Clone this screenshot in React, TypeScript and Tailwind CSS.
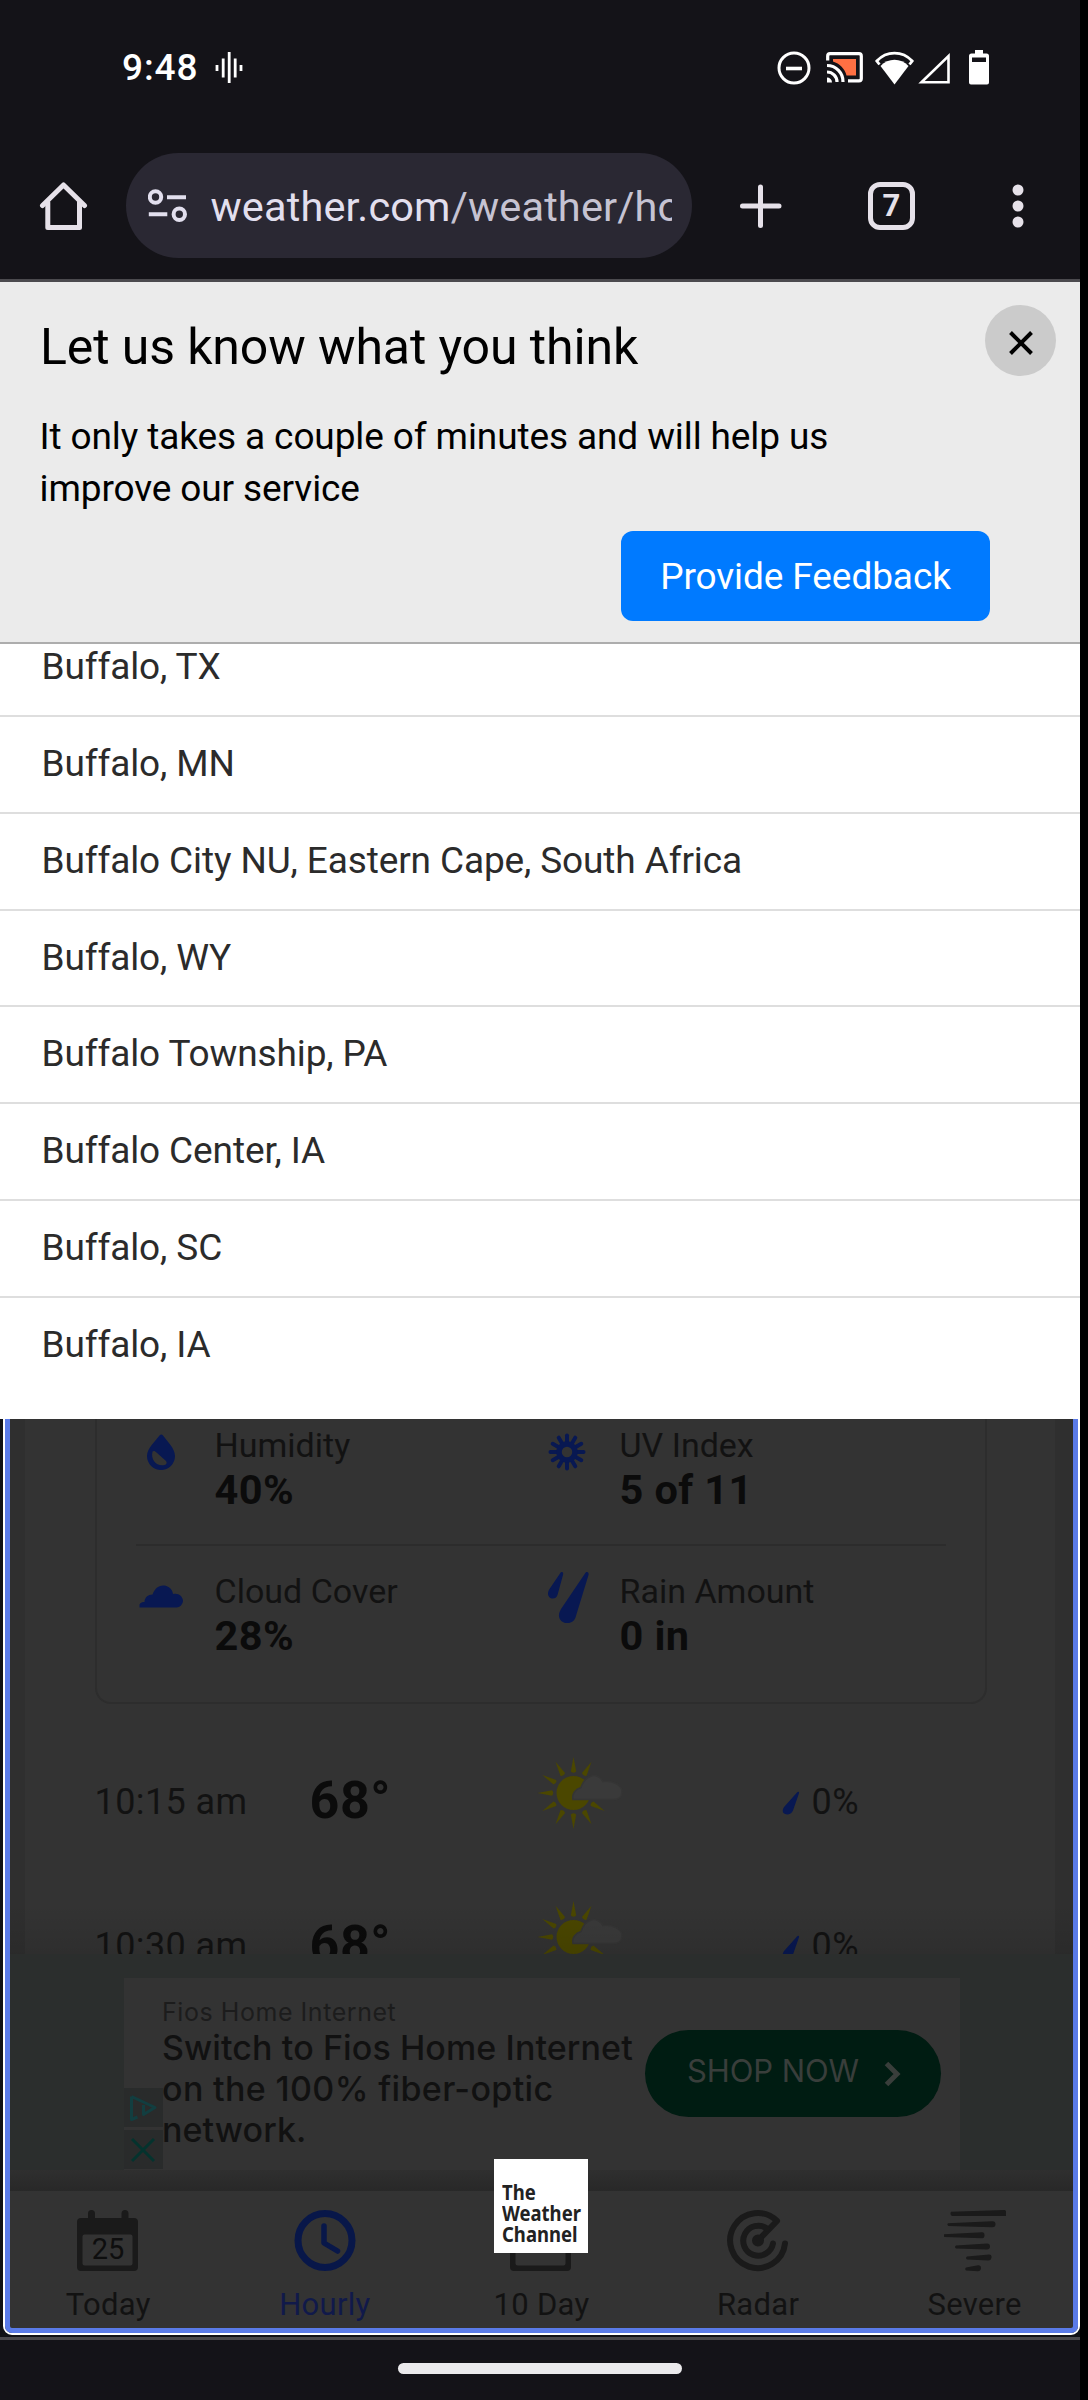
import React from "react";

const cities = [
  "Buffalo, TX",
  "Buffalo, MN",
  "Buffalo City NU, Eastern Cape, South Africa",
  "Buffalo, WY",
  "Buffalo Township, PA",
  "Buffalo Center, IA",
  "Buffalo, SC",
  "Buffalo, IA",
];

function StatusBar() {
  return (
    <div className="flex h-[132px] items-center pt-[3px] pl-[122px] text-white">
      <span className="w-[93px] font-['Roboto'] text-[37px] leading-[44px] font-medium tracking-[0.9px]">9:48</span>
      <svg width="28" height="32" viewBox="0 0 28 32" stroke="#fff" strokeWidth="2.8">
        <path d="M2 13v6M8.2 6.500v19M14.200 0v31M20.200 6.500v19M26 13v6" />
      </svg>
      <div className="flex flex-1 items-center pl-[534px]">
        <svg width="34" height="34" viewBox="0 0 34 34" fill="none" stroke="#fff">
          <circle cx="17" cy="17" r="15" strokeWidth="3" />
          <path d="M9 17.500h16" strokeWidth="3.600" />
        </svg>
        <svg className="ml-[15px]" width="37" height="31" viewBox="0 0 37 31" fill="none">
          <path d="M7 7h23v16.500H20.500C19 17 13.500 11.500 7 9.500z" fill="#ff7043" />
          <path d="M1.700 8.500V4a2.300 2.300 0 0 1 2.300-2.300h29A2.300 2.300 0 0 1 35.300 4v22.500a2.300 2.300 0 0 1-2.300 2.300H22" stroke="#fff" strokeWidth="3.200" />
          <path d="M1 13.500A16 16 0 0 1 17 30M1 20a10 10 0 0 1 10 10" stroke="#fff" strokeWidth="3.200" />
          <path d="M1 25.500a5 5 0 0 1 5 5H1z" fill="#fff" />
        </svg>
        <svg className="ml-[12px]" width="39" height="34" viewBox="0 0 39 34" fill="none">
          <path d="M19.500 33.500 5.500 15C13 6.500 26 6.500 33.500 15z" fill="#fff" />
          <path d="M4.500 13.500 1.800 10C11.500-.6 27.500-.6 37.200 10l-2.700 3.500" stroke="#fff" strokeWidth="2.800" />
        </svg>
        <svg className="ml-[4px]" width="33" height="34" viewBox="0 0 33 34" fill="none">
          <path d="M3.500 31.200 30.500 5v26.200z" stroke="#fff" strokeWidth="2.600" />
        </svg>
        <svg className="ml-[18px]" width="20" height="35" viewBox="0 0 20 35">
          <path fillRule="evenodd" fill="#fff" d="M6 0h8v3.500h3.500A2.500 2.500 0 0 1 20 6v26.500a2 2 0 0 1-2 2H2a2 2 0 0 1-2-2V6a2.500 2.500 0 0 1 2.500-2.500H6zM3 7.500V12h14V7.500z" />
        </svg>
      </div>
    </div>
  );
}

function Toolbar() {
  return (
    <div className="flex h-[147px] items-center pl-[39px]">
      <svg width="49" height="50" viewBox="0 0 49 50" fill="none" stroke="#e6e1e9" strokeWidth="5" strokeLinecap="round" strokeLinejoin="round">
        <path d="M3.500 24.500 24.500 4l21 20.500" />
        <path d="M8.800 21.500V46.500h31.700v-25" />
      </svg>
      <div className="ml-[38px] flex h-[105px] w-[566px] items-center rounded-full bg-[#2a2833] pr-[20px] pl-[22px]">
        <svg width="39" height="34" viewBox="0 0 39 34" fill="none" stroke="#e2dfee" strokeWidth="4">
          <circle cx="7.500" cy="8" r="5.700" />
          <path d="M19 8.200h19M.8 25.200h18.500" />
          <circle cx="31.300" cy="25.200" r="5.700" />
        </svg>
        <div className="mt-[3px] ml-[23.500px] w-[461px] overflow-hidden font-['Roboto'] text-[41.5px] leading-[60px] tracking-[0.15px] whitespace-nowrap text-[#e2dfee]">
          weather.com<span className="text-[#c6c3d2]">/weather/hourbyhour</span>
        </div>
      </div>
      <svg className="ml-[47px]" width="44" height="44" viewBox="0 0 44 44" stroke="#e6e1e9" strokeWidth="5" strokeLinecap="round">
        <path d="M21.500 3v38.500M3.500 22h36.500" />
      </svg>
      <div className="ml-[85px] flex h-[48px] w-[47px] items-center justify-center rounded-[12px] border-[5px] border-[#e6e1e9]">
        <span className="font-['Roboto'] text-[31px] leading-[36px] font-bold text-[#e6e1e9]">7</span>
      </div>
      <svg className="ml-[97px]" width="12" height="44" viewBox="0 0 12 44" fill="#e6e1e9">
        <circle cx="6" cy="6" r="5.500" />
        <circle cx="6" cy="22" r="5.500" />
        <circle cx="6" cy="38" r="5.500" />
      </svg>
    </div>
  );
}

function FeedbackBanner() {
  return (
    <section className="relative h-[362px] border-b-2 border-[#adadad] bg-[#ebebeb] font-['Roboto'] text-black">
      <h1 className="pt-[35px] pl-[40px] text-[50px] leading-[60px] tracking-[-0.12px]">Let us know what you think</h1>
      <p className="mt-[34px] w-[860px] pl-[39.500px] text-[37px] leading-[52px] tracking-[-0.11px]">
        It only takes a couple of minutes and will help us improve our service
      </p>
      <button className="mt-[16px] ml-[621px] flex h-[90px] w-[369px] items-center justify-center rounded-[12px] bg-[#007aff] pt-[2px] text-[37px] tracking-[-0.09px] text-white">
        Provide Feedback
      </button>
      <button className="absolute top-[23px] right-[24px] flex size-[71px] items-center justify-center rounded-full bg-[#cbcbcb]">
        <svg className="mt-[4px]" width="26" height="26" viewBox="0 0 26 26" stroke="#000" strokeWidth="4">
          <path d="M2.500 2.500l21 21M23.500 2.500l-21 21" />
        </svg>
      </button>
    </section>
  );
}

function CityList() {
  return (
    <div className="h-[775px] overflow-hidden bg-white">
      <ul className="mt-[-23.750px] font-['Roboto'] text-[37px] tracking-[-0.12px] text-[#2b2b2b]">
        {cities.map((c) => (
          <li key={c} className="h-[96.750px] border-b-2 border-[#dedede] pl-[41.500px] leading-[94px] last:border-b-0">
            {c}
          </li>
        ))}
      </ul>
    </div>
  );
}

const ink = "#081852";

function HumidityIcon() {
  return (
    <svg width="50" height="54" viewBox="0 0 50 54">
      <path fill={ink} d="M23.500 10.500c1-1.300 2.500-1.300 3.500 0C31.500 16.500 39 23.500 39 31a14 14 0 0 1-28 0c0-7.500 8-14.500 12.500-20.500z" />
      <path fill="#333" d="M16.500 26.500c1.500-1 2.500-.5 4 1l9.500 8.500c1.300 1.500.5 3.500-1.500 4-8 1.500-14-5-12-13.500z" />
    </svg>
  );
}

function UvIcon() {
  return (
    <svg width="50" height="54" viewBox="0 0 50 54">
      <g transform="translate(26 27)" stroke={ink} strokeLinecap="round">
        {Array.from({ length: 12 }, (_, i) => (
          <path key={i} d="M0-9.500v-7" strokeWidth="4" transform={`rotate(${i * 30})`} />
        ))}
        <circle r="8" fill="none" strokeWidth="5.500" />
      </g>
    </svg>
  );
}

function CloudIcon() {
  return (
    <svg width="50" height="54" viewBox="0 0 50 54">
      <path fill={ink} d="M3.500 36.500v-3c1-2 3-2.500 5-2.500 0-4.500 3.500-7.500 8-7.500C19 16.500 24 14 28 14.500c5 .5 8.500 4 9 8.500 5-1.500 10 2 10 7a6.800 6.800 0 0 1-6.500 6.500z" />
    </svg>
  );
}

function RainIcon() {
  return (
    <svg width="50" height="54" viewBox="0 0 50 54" fill={ink}>
      <path d="M19 2.500c1.500-2.500 4-1.500 3 1.500L16.500 24c-1.500 5.500-10 4.500-9.500-2 .2-1.500.6-2.500 1.500-4z" />
      <path d="M44 2.500c1.500-2.800 4.300-1.500 3.500 1.500L34.500 46.500c-3 9-17.500 6.500-16.500-3 .3-2 1-3.500 2-5.500z" />
    </svg>
  );
}

function Detail({ icon, label, value }: { icon: React.ReactNode; label: string; value: string }) {
  return (
    <div className="flex w-[406px] gap-[29px]">
      {icon}
      <div>
        <div className="text-[34px] leading-[40px] text-[#121212]">{label}</div>
        <div className="text-[41.500px] leading-[50px] font-bold tracking-[0.4px] text-[#0b0b0b]">{value}</div>
      </div>
    </div>
  );
}

function PartlyCloudy() {
  return (
    <svg width="86" height="74" viewBox="0 0 86 74">
      <g transform="translate(36.500 37)" fill="#4b4700">
        <circle r="17" />
        {Array.from({ length: 12 }, (_, i) =>
          i === 2 || i === 3 ? null : (
            <path key={i} d="M-2.700-21.500 0-36 2.700-21.500Q0-19-2.700-21.500z" transform={`rotate(${i * 30})`} />
          ),
        )}
      </g>
      <path d="M36 43.500c-1.500-6 3-10.500 8-12 3.500-11 15-17 22-6 9-1 19 3 19 10 0 6-3 8-8 8z" fill="#3a3a3a" stroke="#353535" strokeWidth="1.500" />
    </svg>
  );
}

function HourRow({ time }: { time: string }) {
  return (
    <div className="flex h-[144px] items-center pl-[94px] text-[#121212]">
      <div className="w-[215px] text-[36px] leading-[44px] tracking-[0.4px]">{time}</div>
      <div className="mt-[-1px] w-[227.500px] text-[52px] leading-[60px] font-bold tracking-[0.6px] text-[#0b0b0b]">68°</div>
      <div className="mt-[-18px]">
        <PartlyCloudy />
      </div>
      <svg className="mt-[3px] ml-[159px]" width="18" height="26" viewBox="0 0 18 26">
        <path fill={ink} d="M15 2.500c1-1.500 2.500-.8 2 .8L11 20.500c-2 5.500-11 5-10.200-.5.3-1.500 1-2.500 1.700-3.500z" />
      </svg>
      <div className="ml-[11.500px] text-[36px] leading-[44px] tracking-[0.6px]">0%</div>
    </div>
  );
}

function AdBanner() {
  return (
    <div className="h-[237px] bg-[#2b2e2d] pt-[24px]">
      <div className="relative ml-[123.500px] flex h-[192px] w-[836.500px] bg-[#333]">
        <div className="pt-[19px] pl-[38.500px] font-['Inter'] whitespace-nowrap">
          <div className="text-[25px] leading-[30px] tracking-[0.55px] text-[#1c1c1c]">Fios Home Internet</div>
          <div className="text-[34px] leading-[41px] font-medium tracking-[0.1px] text-[#111]">
            Switch to Fios Home Internet
            <br />
            <span className="tracking-[0.35px]">on the 100% fiber-optic</span>
            <br />
            network.
          </div>
        </div>
        <div className="absolute top-[52px] left-[521.500px] flex h-[87px] w-[296px] items-center rounded-full bg-[#001c12] pl-[42px]">
          <span className="w-[197px] pb-[4px] font-['Inter'] text-[31px] tracking-[-0.1px] whitespace-nowrap text-[#393e3b]">SHOP NOW</span>
          <svg width="18" height="26" viewBox="0 0 18 26" fill="none" stroke="#393e3b" strokeWidth="5">
            <path d="M2.500 2.500 13 13 2.500 23.500" />
          </svg>
        </div>
        <div className="absolute top-[110px] left-0 flex flex-col gap-[3px]">
          <div className="flex size-[39px] items-center justify-center bg-[#292b2b]">
            <svg width="28" height="30" viewBox="0 0 28 30" fill="none" stroke="#123e40" strokeWidth="3">
              <path d="M2.500 3.500v23l6-2.500M2.500 3.500 26 14.500 14.500 21.500V12" strokeLinejoin="round" />
            </svg>
          </div>
          <div className="flex size-[39px] items-center justify-center bg-[#292b2b]">
            <svg width="24" height="26" viewBox="0 0 24 26" stroke="#04332e" strokeWidth="3">
              <path d="M1 2l22 22M23 2 1 24" />
            </svg>
          </div>
        </div>
      </div>
      <div className="h-[21px] bg-linear-to-b from-[#2f2f2f] to-[#282828]" />
    </div>
  );
}

function Calendar({ day }: { day?: string }) {
  return (
    <svg width="62" height="62" viewBox="0 0 62 62">
      <path fill="#1a1a1a" fillRule="evenodd" d="M11 8V3.500a3.500 3.500 0 0 1 7 0V8h26.500V3.500a3.500 3.500 0 0 1 7 0V8H57a4 4 0 0 1 4 4v45a4 4 0 0 1-4 4H4a4 4 0 0 1-4-4V12a4 4 0 0 1 4-4zM7.500 24.500a2 2 0 0 0-2 2V53.500a2 2 0 0 0 2 2h46a2 2 0 0 0 2-2v-27a2 2 0 0 0-2-2z" />
      {day && (
        <text x="31" y="49" textAnchor="middle" fontFamily="Roboto" fontSize="29" fill="#0e0e0e">{day}</text>
      )}
    </svg>
  );
}

function ClockIcon() {
  return (
    <svg width="62" height="62" viewBox="0 0 62 62" fill="none" stroke="#081749">
      <circle cx="31" cy="30.500" r="27" strokeWidth="7" />
      <path d="M30 16v17l13.500 8" strokeWidth="5.500" strokeLinecap="round" strokeLinejoin="round" />
    </svg>
  );
}

function RadarIcon() {
  return (
    <svg width="62" height="62" viewBox="0 0 62 62" fill="none" stroke="#1a1a1a" strokeWidth="6" strokeLinecap="round" strokeLinejoin="round">
      <path d="M58 33.500A27.500 27.500 0 1 1 50 11L31 30.500" />
      <path d="M46 33.500A15 15 0 1 1 40 18.500" />
      <circle cx="31" cy="30.500" r="3" />
    </svg>
  );
}

function SevereIcon() {
  return (
    <svg width="62" height="62" viewBox="0 0 62 62" fill="#1a1a1a">
      <path d="M7 1.800 60.500 0q1.500 0 1.500 1.500V6H8Q5.500 4.500 7 1.800zM4 13.200l44-2q3.500-.3 3.500 3t-3.500 3L4.500 16Q2.500 15 4 13.200zM0 24.200l38-2q2.500-.2 2.500 3t-2.500 3L.5 27Q-1.500 25.500 0 24.200zM12 35.500l31-2q3 0 3 3t-3 3L12 38.500q-2-1.500 0-3zM23 46.500l22-2q3 0 2.500 3t-3 3L23 49.500q-2-1.500 0-3zM22 57.500l12-2.300q3-.2 3 2.800t-3 3.300L22 60.500q-1.500-1.500 0-3z" />
    </svg>
  );
}

function NavBar() {
  const tabs = [
    { label: "Today", icon: <Calendar day="25" /> },
    { label: "Hourly", icon: <ClockIcon />, active: true },
    { label: "10 Day", icon: <Calendar /> },
    { label: "Radar", icon: <RadarIcon /> },
    { label: "Severe", icon: <SevereIcon /> },
  ];
  return (
    <nav className="flex h-[146px] w-[1083px] bg-[#333] pt-[19px]">
      {tabs.map((t) => (
        <div key={t.label} className="flex flex-1 flex-col items-center">
          {t.icon}
          <span className={t.active ? "mt-[13px] text-[31px] leading-[40px] tracking-[0.3px] text-[#10194a]" : "mt-[13px] text-[31px] leading-[40px] tracking-[0.3px] text-[#121212]"}>
            {t.label}
          </span>
        </div>
      ))}
    </nav>
  );
}

function DimmedPage() {
  return (
    <div className="relative h-[918px] bg-[#131217] font-['Roboto']">
      <div className="h-[915px] overflow-hidden rounded-b-[8px] bg-[#2f2f2f]">
        <div className="h-[535px] overflow-hidden px-[25px]">
          <div className="h-full bg-[#333]">
            <div className="ml-[69.500px] h-[285px] w-[892px] rounded-b-[16px] border-2 border-t-0 border-[#2d2d2d] px-[39px] pt-[5.500px]">
              <div className="flex">
                <Detail icon={<HumidityIcon />} label="Humidity" value="40%" />
                <Detail icon={<UvIcon />} label="UV Index" value="5 of 11" />
              </div>
              <div className="mt-[29px] mb-[25px] h-[2px] bg-[#2c2c2c]" />
              <div className="flex">
                <Detail icon={<CloudIcon />} label="Cloud Cover" value="28%" />
                <Detail icon={<RainIcon />} label="Rain Amount" value="0 in" />
              </div>
            </div>
            <div className="mt-[25.500px] ml-[-24.500px] w-[1054px]">
              <HourRow time="10:15 am" />
              <HourRow time="10:30 am" />
            </div>
          </div>
        </div>
        <AdBanner />
        <NavBar />
      </div>
      <div className="absolute top-[485px] left-0 h-[50px] w-full bg-linear-to-b from-transparent to-black/10" />
      <div className="absolute top-0 left-0 h-[918px] w-full overflow-hidden">
        <div className="absolute -top-[20px] left-[2.500px] h-[936px] w-[1077px] rounded-[9px] border-2 border-white shadow-[0_0_0_12px_#101116]">
          <div className="h-full w-full rounded-[7px] border-[5px] border-[#5a7be8]" />
        </div>
      </div>
      <div className="absolute top-[740px] left-[494px] h-[94px] w-[94px] bg-white pt-[23px] pl-[8px]">
        <div className="w-[100px] origin-left scale-x-[0.88] font-['Noto_Sans'] text-[21px] leading-[21px] font-bold text-[#222]">
          The
          <br />
          Weather
          <br />
          Channel
        </div>
      </div>
    </div>
  );
}

export default function App() {
  return (
    <div className="h-[2400px] w-[1088px] overflow-hidden bg-black">
      <div className="h-full w-[1080px] bg-[#141318]">
        <StatusBar />
        <Toolbar />
        <div className="h-[3px] bg-[#4b4a4e]" />
        <FeedbackBanner />
        <CityList />
        <DimmedPage />
        <div className="h-[3px] bg-[#49484d]" />
        <div className="mt-[23px] ml-[398px] h-[11px] w-[284px] rounded-full bg-[#ebeaec]" />
      </div>
    </div>
  );
}
